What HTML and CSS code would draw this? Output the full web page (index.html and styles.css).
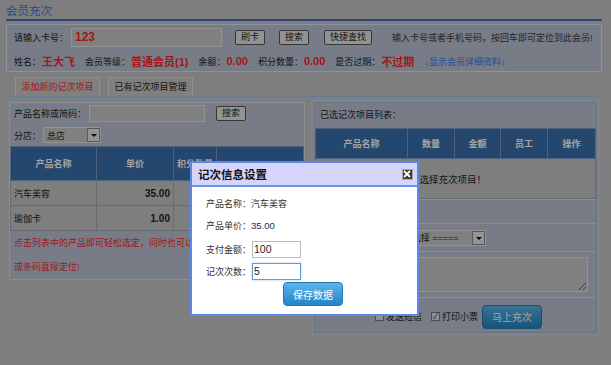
FILE: index.html
```html
<!DOCTYPE html>
<html lang="zh-CN">
<head>
  <meta charset="utf-8">
  <title>会员充次</title>
  <link rel="stylesheet" href="styles.css">
</head>
<body>
  <div class="page">
    <h1 class="title">会员充次</h1>

    <!-- 会员信息 -->
    <div class="member">
      <div class="member-row">
        <span>请输入卡号：</span>
        <input class="card-no" type="text" value="123">
        <button class="btn btn-swipe">刷卡</button>
        <button class="btn btn-search">搜索</button>
        <button class="btn btn-find">快捷查找</button>
        <span class="hint">输入卡号或者手机号码，按回车即可定位到此会员!</span>
      </div>
      <div class="member-row info">
        <span class="label">姓名：</span><b class="val">王大飞</b>
        <span class="label">会员等级：</span><b class="val">普通会员(1)</b>
        <span class="label">余额：</span><b class="val">0.00</b>
        <span class="label">积分数量：</span><b class="val">0.00</b>
        <span class="label">是否过期：</span><b class="val">不过期</b>
        <a class="detail" href="#">↓显示会员详细资料↓</a>
      </div>
    </div>

    <div class="tabs">
      <div class="tab active">添加新的记次项目</div>
      <div class="tab">已有记次项目管理</div>
    </div>

    <div class="work">
      <!-- 产品列表 -->
      <div class="product-box">
        <div class="search-row">
          <span>产品名称或简码：</span>
          <input class="text-input" type="text">
          <button class="btn">搜索</button>
        </div>
        <div class="branch-row">
          <span>分店：</span>
          <div class="select shop"><span>总店</span><i class="arrow"></i></div>
        </div>
        <table class="grid products">
          <colgroup><col style="width:86px"><col style="width:77px"><col style="width:43px"><col></colgroup>
          <tr><th>产品名称</th><th>单价</th><th>积分数量</th><th></th></tr>
          <tr><td>汽车美容</td><td class="num">35.00</td><td></td><td></td></tr>
          <tr><td>瑜伽卡</td><td class="num">1.00</td><td></td><td></td></tr>
        </table>
        <p class="note">点击列表中的产品即可轻松选定，同时也可以输入产品名称、简码<br>或条码直接定位!</p>
      </div>

      <!-- 已选项目 -->
      <div class="selected-wrap">
        <div class="selected-box">
          <div class="selected-title">已选记次项目列表：</div>
          <table class="grid sel">
            <colgroup><col style="width:92px"><col style="width:47px"><col style="width:46px"><col style="width:47px"><col></colgroup>
            <tr><th>产品名称</th><th>数量</th><th>金额</th><th>员工</th><th>操作</th></tr>
            <tr class="empty"><td colspan="5">请选择充次项目！</td></tr>
          </table>
          <div class="form-row row-total">合计金额：0.00</div>
          <div class="form-row row-staff">
            <span>服务员工：</span>
            <div class="select staff"><span>===== 请选择 =====</span><i class="arrow"></i></div>
          </div>
          <div class="form-row row-remark">
            <span>备注：</span>
            <textarea class="remark"></textarea>
          </div>
          <div class="form-row row-submit">
            <label class="check-label"><span class="check"></span>发送短信</label>
            <label class="check-label"><span class="check on">✓</span>打印小票</label>
            <button class="btn-blue">马上充次</button>
          </div>
        </div>
      </div>
    </div>
  </div>

  <div class="mask"></div>

  <!-- 记次信息设置 -->
  <div class="dialog">
    <div class="dialog-head">
      <span class="dialog-title">记次信息设置</span>
      <span class="close"><svg width="10" height="10" viewBox="0 0 10 10"><path d="M2 2L8 8M8 2L2 8" stroke="#fff" stroke-width="1.8"/></svg></span>
    </div>
    <div class="dialog-body">
      <div class="d-row">产品名称：<span>汽车美容</span></div>
      <div class="d-row">产品单价：<span class="price">35.00</span></div>
      <div class="d-row gap"><span class="d-label">支付金额：</span><input class="d-input" type="text" value="100"></div>
      <div class="d-row"><span class="d-label">记次次数：</span><input class="d-input focus" type="text" value="5"></div>
      <div class="d-actions"><button class="btn-blue">保存数据</button></div>
    </div>
  </div>
</body>
</html>
```

FILE: styles.css
```css
* {
  box-sizing: border-box;
}

body {
  margin: 0;
  width: 611px;
  height: 365px;
  overflow: hidden;
  position: relative;
  background: #c5c5c5;
  font-family: "Liberation Sans", "Noto Sans CJK SC", sans-serif;
  font-size: 9px;
  color: #1e1e1e;
}

.page {
  padding: 0 9px 0 6px;
}

.title {
  margin: 0;
  height: 21px;
  padding-top: 3px;
  line-height: 16px;
  font-size: 11.5px;
  font-weight: normal;
  color: #4573d0;
  border-bottom: 2px solid #4470bf;
}

/* 会员信息 */
.member {
  margin-top: 3px;
  height: 48px;
  padding: 2px 7px 0;
  background: #bac2d3;
  border: 1px solid #dce5f3;
}

.member-row {
  display: flex;
  align-items: center;
  height: 20px;
  white-space: nowrap;
}

.member-row + .member-row {
  margin-top: 4px;
}

.card-no {
  width: 151px;
  height: 19px;
  margin-left: 3px;
  padding: 0 3px;
  border: 1px solid #e6e6e6;
  background: #c9c9c9;
  color: #fe2626;
  font: bold 12px "Liberation Sans", sans-serif;
}

.btn {
  height: 15px;
  padding: 0 5px;
  border: 1px solid #555;
  border-radius: 2px;
  background: #e6e6e6;
  color: #1e1e1e;
  font: 9px "Liberation Sans", "Noto Sans CJK SC", sans-serif;
  line-height: 13px;
}

.btn-swipe { margin-left: 13px; }
.btn-search { margin-left: 14px; }
.btn-find { margin-left: 15px; }

.hint {
  margin-left: 20px;
  color: #3a3a3a;
}

.info .label {
  margin-left: 10px;
}

.info .label:first-child {
  margin-left: 0;
}

.info .val {
  margin-left: 1px;
  color: #fe2626;
  font-size: 11px;
}

.detail {
  margin-left: 10px;
  color: #3a7ae8;
  text-decoration: none;
}

/* 标签页 */
.tabs {
  display: flex;
  gap: 8px;
  height: 20px;
  margin-top: 5px;
  padding-left: 9px;
  border-bottom: 1px solid #9ec2ec;
}

.tab {
  width: 85px;
  height: 19px;
  line-height: 18px;
  text-align: center;
  border: 1px solid #e0e0e0;
  border-bottom: 0;
  background: #c8c8c8;
}

.tab.active {
  color: #fe2626;
}

.work {
  display: flex;
  align-items: flex-start;
}

/* 左侧产品列表 */
.product-box {
  width: 296px;
  margin: 5px 0 0 3px;
  background: #bac2d3;
  border: 1px solid #d6dfee;
}

.search-row,
.branch-row {
  display: flex;
  align-items: center;
  padding-left: 4px;
}

.search-row { height: 21px; }
.branch-row { height: 22px; }

.text-input {
  width: 116px;
  height: 17px;
  margin-left: 3px;
  border: 1px solid #e6e6e6;
  background: #c9c9c9;
}

.search-row .btn {
  width: 30px;
  margin-left: 11px;
}

.select {
  display: flex;
  align-items: center;
  justify-content: space-between;
  height: 16px;
  padding-left: 3px;
  border: 1px solid #e6e6e6;
  background: #c9c9c9;
  white-space: nowrap;
}

.select.shop {
  width: 58px;
  margin-left: 2px;
}

.select.staff {
  width: 116px;
  margin-left: 5px;
}

.arrow {
  position: relative;
  width: 13px;
  height: 14px;
  background: #e8e8e8;
  border: 1px solid #8a8a8a;
}

.arrow::after {
  content: "";
  position: absolute;
  left: 3px;
  top: 5px;
  border: 3px solid transparent;
  border-top: 3px solid #111;
}

.grid {
  width: 100%;
  border-collapse: collapse;
  table-layout: fixed;
}

.grid th {
  height: 34px;
  padding: 0 2px;
  background: #3a6fac;
  color: #fff;
  border: 1px solid #7d9cc6;
  font-weight: bold;
  white-space: nowrap;
  overflow: hidden;
}

.grid td {
  height: 25px;
  padding: 0 3px;
  background: #c5c5c5;
  border: 1px solid #a3a8b2;
}

.grid .num {
  text-align: right;
  font-weight: bold;
  font-size: 10px;
}

.note {
  margin: 0;
  padding-left: 4px;
  line-height: 24px;
  color: #fe2626;
}

/* 右侧已选项目 */
.selected-wrap {
  width: 289px;
  margin: 2px 0 0 6px;
  padding: 3px;
  background: #c4cddd;
}

.selected-box {
  background: #bac2d3;
  border: 1px solid #a9b3c6;
}

.selected-title {
  height: 25px;
  line-height: 25px;
  padding-left: 5px;
}

.grid.sel th {
  height: 30px;
}

.grid .empty td {
  height: 40px;
  padding-right: 18px;
  text-align: center;
  font-size: 9.5px;
}

.form-row {
  display: flex;
  align-items: center;
  padding-left: 5px;
  border-top: 1px solid #d6dfee;
  white-space: nowrap;
}

.row-total { height: 24px; }
.row-staff { height: 28px; }
.row-remark { height: 46px; }

.remark {
  width: 218px;
  height: 35px;
  margin-left: 23px;
  border: 1px solid #e6e6e6;
  background: #c9c9c9;
}

.row-submit {
  height: 35px;
  padding: 3px 0 0 6px;
  justify-content: center;
}

.check-label {
  display: flex;
  align-items: center;
  margin-right: 9px;
}

.check-label + .check-label {
  margin-right: 4px;
}

.check {
  width: 9px;
  height: 9px;
  margin-right: 2px;
  border: 1px solid #7a7a7a;
  background: #e2e2e2;
  color: #2643a8;
  font-size: 8px;
  line-height: 7px;
  text-align: center;
}

.btn-blue {
  width: 60px;
  height: 24px;
  padding: 0;
  border: 1px solid #2476b0;
  border-radius: 4px;
  background: linear-gradient(#5ab6ea, #2383c6);
  color: #fff;
  font: 10px "Liberation Sans", "Noto Sans CJK SC", sans-serif;
}

/* 遮罩 + 弹窗 */
.mask {
  position: absolute;
  inset: 0;
  background: rgba(0, 0, 0, 0.36);
}

.dialog {
  position: absolute;
  left: 190px;
  top: 161px;
  width: 229px;
  height: 155px;
  border: 2px solid #5b87e6;
  background: #fff;
  color: #333;
}

.dialog-head {
  display: flex;
  align-items: center;
  justify-content: space-between;
  height: 24px;
  padding: 0 4px 0 6px;
  background: #d5d5fb;
  border-bottom: 2px solid #6b91e6;
}

.dialog-title {
  font-size: 11.5px;
  font-weight: bold;
  color: #111;
}

.close {
  display: flex;
  width: 11px;
  height: 11px;
  background: #3a3a3a;
  border: 1px solid #a8a8a8;
}

.close svg {
  margin: -1px 0 0 -1px;
}

.dialog-body {
  padding: 5px 0 0 14px;
}

.d-row {
  display: flex;
  align-items: center;
  height: 22px;
}

.d-row.gap {
  margin-top: 2px;
}

.d-label {
  width: 46px;
}

.price {
  color: #1d2b55;
  font-size: 9.5px;
}

.d-input {
  width: 49px;
  height: 17px;
  padding: 0 1px;
  border: 1px solid #b9b9b9;
  color: #222;
  font: 10.5px "Liberation Sans", sans-serif;
}

.d-input.focus {
  border-color: #5d9ddf;
  box-shadow: 0 0 2px #9cc8f0;
  outline: none;
}

.d-actions {
  padding-left: 77px;
}
```
